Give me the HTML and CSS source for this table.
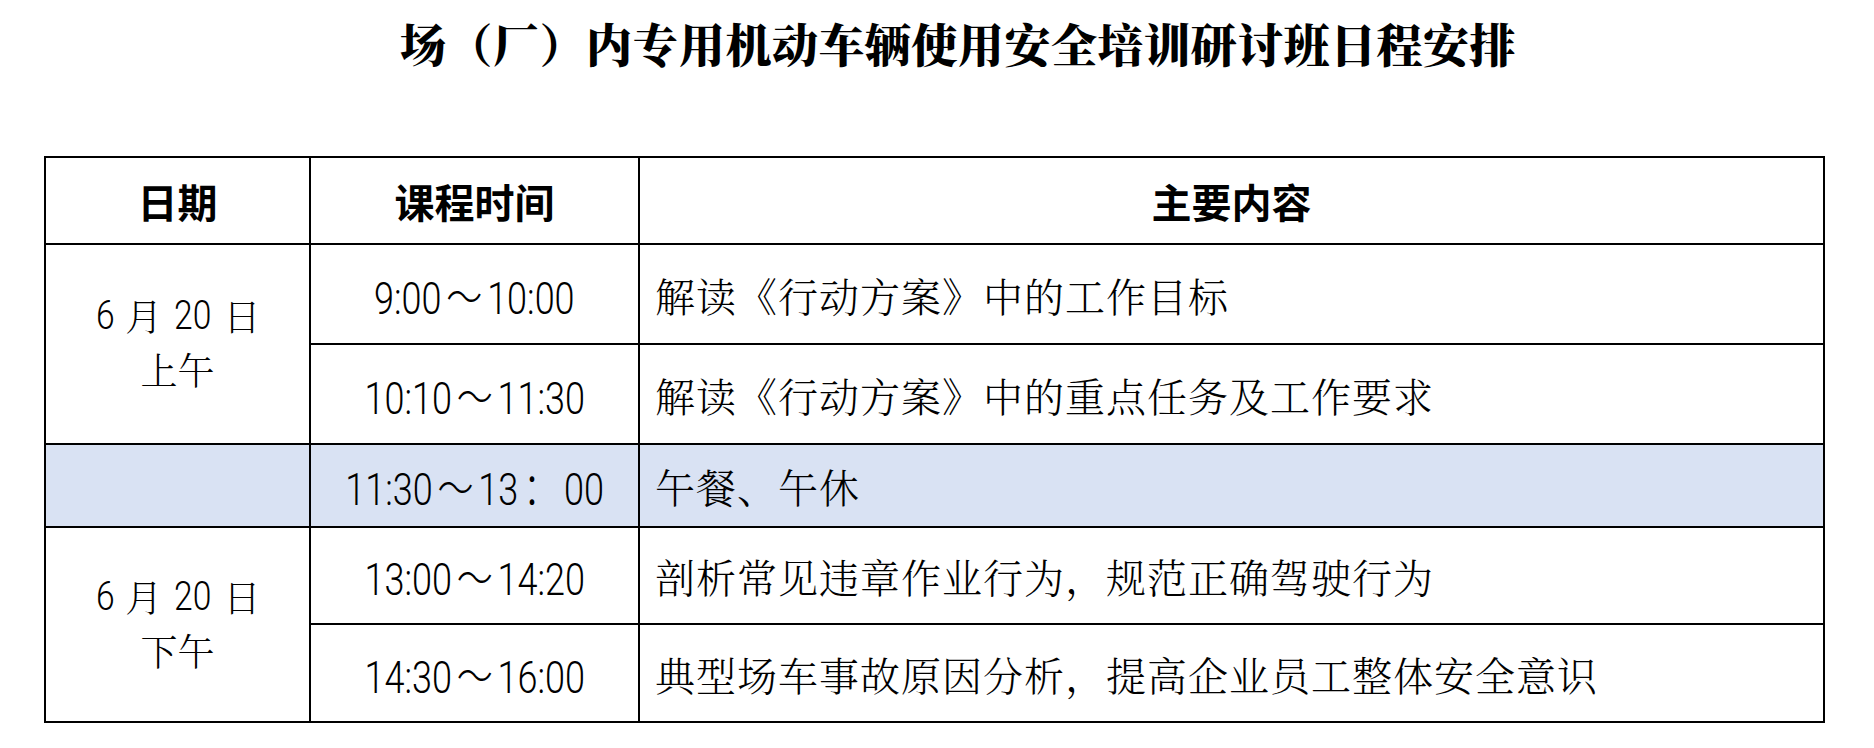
FILE: index.html
```html
<!DOCTYPE html>
<html lang="zh-CN">
<head>
<meta charset="utf-8">
<title>日程安排</title>
<link rel="stylesheet" href="styles.css">
</head>
<body>
<h1 class="title">场（厂）内专用机动车辆使用安全培训研讨班日程安排</h1>
<div class="grid">
  <div class="cell head">日期</div>
  <div class="cell head">课程时间</div>
  <div class="cell head">主要内容</div>

  <div class="cell date span2"><div class="dl"><span class="dn">6</span>月<span class="dn">20</span>日</div><div class="dl">上午</div></div>
  <div class="cell time"><span class="t">9:00<span class="tl">～</span>10:00</span></div>
  <div class="cell text">解读《行动方案》中的工作目标</div>
  <div class="cell time"><span class="t">10:10<span class="tl">～</span>11:30</span></div>
  <div class="cell text">解读《行动方案》中的重点任务及工作要求</div>

  <div class="cell lunch"></div>
  <div class="cell time lunch"><span class="t">11:30<span class="tl">～</span>13<span class="tl">：</span>00</span></div>
  <div class="cell text lunch">午餐、午休</div>

  <div class="cell date span2"><div class="dl"><span class="dn">6</span>月<span class="dn">20</span>日</div><div class="dl">下午</div></div>
  <div class="cell time"><span class="t">13:00<span class="tl">～</span>14:20</span></div>
  <div class="cell text">剖析常见违章作业行为，规范正确驾驶行为</div>
  <div class="cell time"><span class="t">14:30<span class="tl">～</span>16:00</span></div>
  <div class="cell text">典型场车事故原因分析，提高企业员工整体安全意识</div>
</div>
</body>
</html>
```
FILE: styles.css
```css
html, body {
  margin: 0;
  padding: 0;
  background: #ffffff;
  color: #000000;
}
body {
  width: 1874px;
  height: 748px;
  overflow: hidden;
  font-family: "Noto Sans CJK SC", "Noto Sans", sans-serif;
}
.title {
  margin: 12px 0 0 0;
  padding-left: 42px;
  height: 60px;
  line-height: 60px;
  text-align: center;
  font-family: "Noto Serif CJK SC", "Noto Sans CJK SC", serif;
  font-weight: 900;
  font-size: 46px;
  letter-spacing: 0.5px;
}
.grid {
  margin: 84px 0 0 44px;
  width: 1781px;
  box-sizing: border-box;
  border-top: 2px solid #000;
  border-left: 2px solid #000;
  display: grid;
  grid-template-columns: 265px 329px 1fr;
  grid-template-rows: 87px 100px 100px 83px 97px 98px;
}
.cell {
  box-sizing: border-box;
  border-right: 2px solid #000;
  border-bottom: 2px solid #000;
  display: flex;
  align-items: center;
  font-family: "Noto Serif CJK SC", "Noto Sans CJK SC", serif;
  font-weight: 300;
  font-size: 40px;
  letter-spacing: 1px;
}
.head {
  justify-content: center;
  font-family: "Noto Sans CJK SC", sans-serif;
  font-weight: 700;
  letter-spacing: 0;
}
.span2 {
  grid-row: span 2;
}
.date {
  flex-direction: column;
  justify-content: center;
  padding-bottom: 4px;
  letter-spacing: 0;
  font-size: 37px;
}
.dl {
  height: 54px;
  line-height: 54px;
  display: flex;
  align-items: center;
}
.dn {
  display: inline-block;
  font-family: "Roboto", "Liberation Sans", sans-serif;
  font-weight: 300;
  font-size: 41px;
  margin: 0 8px;
  transform: scaleX(0.82);
}
.dn:first-child {
  margin-left: 0;
}
.time {
  justify-content: center;
  letter-spacing: 0;
}
.t {
  display: inline-block;
  white-space: nowrap;
  font-family: "Roboto", "Liberation Sans", sans-serif;
  font-weight: 300;
  font-size: 45px;
  transform: scaleX(0.8);
}
.tl {
  font-family: "Noto Sans CJK SC", sans-serif;
  font-weight: 300;
  margin: 0 6px;
}
.text {
  padding-left: 15px;
}
.lunch {
  background: #d9e2f3;
}
```
